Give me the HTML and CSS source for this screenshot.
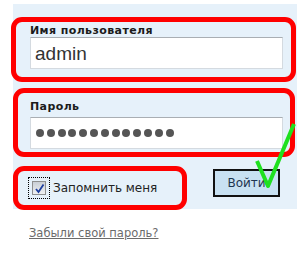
FILE: index.html
```html
<!doctype html>
<html lang="ru">
<head>
	<meta charset="UTF-8">
	<title>Вход</title>
	<link rel="stylesheet" href="styles.css">
</head>
<body>
	<div id="login">
		<div class="mark first">
			<label class="caption">Имя пользователя</label>
			<div class="field">admin</div>
		</div>

		<div class="mark second">
			<label class="caption">Пароль</label>
			<div class="field dots">
				<i></i><i></i><i></i><i></i><i></i><i></i><i></i><i></i><i></i><i></i><i></i><i></i><i></i>
			</div>
		</div>

		<div class="row">
			<div class="mark remember">
				<span class="focus"><span class="box">
					<svg width="11" height="11" viewBox="0 0 11 11"><path d="M2 6 L4.5 9 L9.5 1.5" fill="none" stroke="#1d3f9e" stroke-width="1.8"/></svg>
				</span></span>
				<span class="remember-text">Запомнить меня</span>
			</div>
			<button class="enter">Войти</button>
		</div>

		<svg class="tick" width="50" height="80" viewBox="0 0 50 80"><path d="M7 43 L18 68 L44 6" fill="none" stroke="#1fe01f" stroke-width="4" stroke-linejoin="round"/></svg>
	</div>

	<a class="forgot" href="#">Забыли свой пароль?</a>
</body>
</html>
```

FILE: styles.css
```css
*{
	margin:0;
	padding:0;
	box-sizing:border-box;
}

body{
	background:#fff;
	padding-top:4px;
	font-family:"DejaVu Sans", Verdana, sans-serif;
}

#login{
	position:relative;
	margin-left:13px;
	width:284px;
	height:205px;
	background:#e6f1fa;
	padding-top:13px;
}

.mark{
	border:5px solid #ff0000;
	border-radius:11px;
}

.first{
	margin-left:-2px;
	width:285px;
	padding:2px 8px 8px 14px;
}

.second{
	margin-top:6px;
	width:282px;
	padding:5px 7px 3px 12px;
}

.caption{
	display:block;
	font-size:11px;
	font-weight:bold;
	letter-spacing:0.4px;
	color:#1b1b1b;
	line-height:13px;
	height:13px;
}

.second .caption{
	height:19px;
	padding-top:2px;
}

.field{
	height:32px;
	width:253px;
	background:#fff;
	border:1px solid #d4dae0;
	border-top-color:#a9aeb3;
	font-family:"Liberation Sans", Arial, sans-serif;
	font-size:19px;
	color:#333;
	padding:5px 0 0 4px;
}

.dots{
	display:flex;
	align-items:center;
	gap:2.8px;
	padding:0 0 0 5px;
}

.dots i{
	display:block;
	width:8px;
	height:8px;
	border-radius:50%;
	background:#555;
}

.row{
	display:flex;
	align-items:flex-start;
	margin-top:9px;
}

.remember{
	width:174px;
	height:44px;
	display:flex;
	align-items:center;
	padding-left:10px;
}

.focus{
	display:flex;
	align-items:center;
	justify-content:center;
	width:22px;
	height:22px;
	border:1px dotted #000;
}

.box{
	display:flex;
	align-items:center;
	justify-content:center;
	width:14px;
	height:14px;
	border:1px solid #8e8f8f;
	background:linear-gradient(#c9cfd6, #eef0f2);
}

.remember-text{
	margin-left:3px;
	font-size:12px;
	color:#222;
}

.enter{
	margin:3px 0 0 26px;
	width:67px;
	height:28px;
	border:2px solid #111;
	background:#c8e1f2;
	font-family:"DejaVu Sans", Verdana, sans-serif;
	font-size:12px;
	color:#1e3550;
}

.tick{
	position:absolute;
	left:237px;
	top:114px;
}

.forgot{
	display:inline-block;
	margin:17px 0 0 29px;
	font-size:11.5px;
	color:#6b6b6b;
}
```
